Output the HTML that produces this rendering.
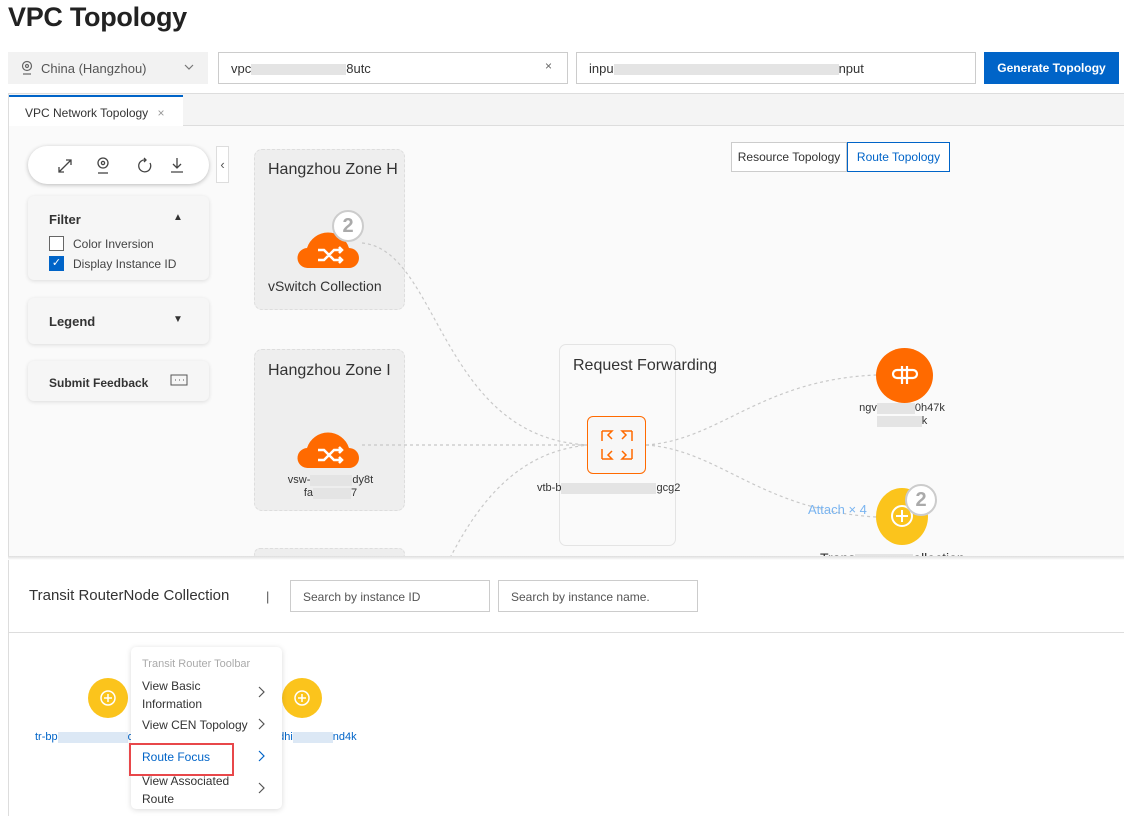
<!DOCTYPE html>
<html><head><meta charset="utf-8"><style>
*{box-sizing:border-box;margin:0;padding:0}
body{width:1124px;height:816px;overflow:hidden;background:#fff;font-family:"Liberation Sans",sans-serif;color:#333;position:relative}
.a{position:absolute}
.blur{background:#e4e4e4;display:inline-block;height:11px;vertical-align:middle}
.card{background:#f6f6f6;border-radius:6px;box-shadow:0 1px 4px rgba(0,0,0,.12)}
.zone{background:#eeeeee;border:1px dashed #ddd;border-radius:8px}
</style></head><body>
<div class="a" style="left:8px;top:2px;font-size:27px;color:#222;font-weight:bold;letter-spacing:-0.3px">VPC Topology</div>
<div class="a" style="left:8px;top:52px;width:200px;height:32px;background:#f2f2f2;font-size:13px;color:#555;padding:9px 0 0 33px">China (Hangzhou)</div>
<svg class="a" style="left:20px;top:60px" width="14" height="16" viewBox="0 0 14 16" fill="none" stroke="#666" stroke-width="1.2"><circle cx="7" cy="6" r="4.5"/><circle cx="7" cy="6" r="1.5"/><path d="M3 14h8"/></svg>
<svg class="a" style="left:184px;top:64px" width="10" height="7" fill="none" stroke="#777" stroke-width="1.2"><path d="M1 1l4 4 4-4"/></svg>
<div class="a" style="left:218px;top:52px;width:350px;height:32px;border:1px solid #ccc;font-size:13px;padding:8px 0 0 12px">vpc<span class="blur" style="width:95px"></span>8utc</div>
<div class="a" style="left:545px;top:59px;font-size:12px;color:#666">×</div>
<div class="a" style="left:576px;top:52px;width:400px;height:32px;border:1px solid #ccc;font-size:13px;padding:8px 0 0 12px">inpu<span class="blur" style="width:225px"></span>nput</div>
<div class="a" style="left:984px;top:52px;width:135px;height:32px;background:#0064c8;color:#fff;font-size:12px;font-weight:bold;text-align:center;line-height:32px">Generate Topology</div>
<div class="a" style="left:8px;top:93px;width:1116px;height:33px;background:#f4f4f4;border-top:1px solid #ddd;border-bottom:1px solid #ddd;border-left:1px solid #ddd"></div>
<div class="a" style="left:9px;top:95px;width:174px;height:32px;background:#fff;border-top:2px solid #0064c8;font-size:12px;padding:9px 0 0 16px">VPC Network Topology <span style="color:#999;margin-left:6px">×</span></div>
<div class="a" style="left:8px;top:126px;width:1116px;height:432px;background:#fafafa;border-left:1px solid #ddd"></div>
<div class="a" style="left:28px;top:146px;width:181px;height:38px;background:#fff;border-radius:19px;box-shadow:0 1px 4px rgba(0,0,0,.25)"></div>
<svg class="a" style="left:56px;top:155px" width="140" height="20" fill="none" stroke="#444" stroke-width="1.3"><path d="M3 17l12-12M10 5h5v5M3 12v5h5"/><circle cx="47" cy="8" r="5"/><circle cx="47" cy="8" r="1.6"/><path d="M42 18h10"/><path d="M90 5a6 6 0 1 0 4 3M88 3l2 2-2 2"/><path d="M121 3v10M117 9l4 4 4-4M115 17h12"/></svg>
<div class="a" style="left:216px;top:146px;width:13px;height:37px;border:1px solid #ddd;background:#fff;font-size:13px;line-height:35px;text-align:center;color:#555">‹</div>
<div class="a card" style="left:28px;top:196px;width:181px;height:84px"></div>
<div class="a" style="left:49px;top:212px;font-size:13px;font-weight:bold">Filter</div>
<div class="a" style="left:173px;top:212px;font-size:10px">▲</div>
<div class="a" style="left:49px;top:236px;width:15px;height:15px;border:1px solid #666;background:#fff"></div>
<div class="a" style="left:73px;top:237px;font-size:12px;color:#444">Color Inversion</div>
<div class="a" style="left:49px;top:256px;width:15px;height:15px;background:#0064c8;color:#fff;font-size:11px;text-align:center;line-height:15px">✓</div>
<div class="a" style="left:73px;top:257px;font-size:12px;color:#444">Display Instance ID</div>
<div class="a card" style="left:28px;top:298px;width:181px;height:46px"></div>
<div class="a" style="left:49px;top:314px;font-size:13px;font-weight:bold">Legend</div>
<div class="a" style="left:173px;top:314px;font-size:10px">▼</div>
<div class="a card" style="left:28px;top:361px;width:181px;height:40px"></div>
<div class="a" style="left:49px;top:376px;font-size:12px;font-weight:bold">Submit Feedback</div>
<svg class="a" style="left:170px;top:374px" width="18" height="14" fill="none" stroke="#555"><rect x="1" y="1" width="16" height="10"/><path d="M5 6h1M9 6h1M13 6h1"/></svg>
<div class="a zone" style="left:254px;top:149px;width:151px;height:161px"></div>
<div class="a" style="left:268px;top:161px;font-size:16px;color:#333">Hangzhou Zone H</div>
<div class="a zone" style="left:254px;top:349px;width:151px;height:162px"></div>
<div class="a" style="left:268px;top:362px;font-size:16px;color:#333">Hangzhou Zone I</div>
<div class="a zone" style="left:254px;top:548px;width:151px;height:12px"></div>
<div class="a" style="left:559px;top:344px;width:117px;height:202px;border:1px solid #e4e4e4;border-radius:7px"></div>
<div class="a" style="left:573px;top:357px;font-size:16px;color:#333">Request Forwarding</div>
<svg class="a" style="left:0;top:0" width="1124" height="560" fill="none" stroke="#c8c8c8" stroke-width="1.2" stroke-dasharray="3 3">
<path d="M362 243C440 250 440 440 590 445"/><path d="M362 445H590"/><path d="M450 558C480 500 520 450 590 445"/><path d="M646 445C720 440 760 380 876 375"/><path d="M646 445C720 450 760 510 876 517"/>
</svg>
<svg class="a" style="left:296px;top:222px" width="66" height="48"><path d="M12 46a10 10 0 0 1-1-20 22 22 0 0 1 42 0 10 10 0 0 1 0 20z" fill="#ff6a00"/><path d="M22 28h6l10 10h8M22 38h6l10-10h8M43 25l3 3-3 3M43 35l3 3-3 3" stroke="#fff" stroke-width="2.5" fill="none"/></svg>
<div class="a" style="left:332px;top:210px;width:32px;height:32px;border-radius:50%;background:#fff;border:2px solid #ccc;color:#aaa;font-size:20px;font-weight:bold;text-align:center;line-height:28px">2</div>
<div class="a" style="left:268px;top:278px;font-size:14px">vSwitch Collection</div>
<svg class="a" style="left:296px;top:422px" width="66" height="48"><path d="M12 46a10 10 0 0 1-1-20 22 22 0 0 1 42 0 10 10 0 0 1 0 20z" fill="#ff6a00"/><path d="M22 28h6l10 10h8M22 38h6l10-10h8M43 25l3 3-3 3M43 35l3 3-3 3" stroke="#fff" stroke-width="2.5" fill="none"/></svg>
<div class="a" style="left:283px;top:474px;font-size:11px;line-height:13px;text-align:center;width:95px">vsw-<span class="blur" style="width:42px"></span>dy8t<br>fa<span class="blur" style="width:38px"></span>7</div>
<div class="a" style="left:587px;top:416px;width:59px;height:58px;border:1.5px solid #ff6a00;border-radius:6px;background:#f7f7f7"></div>
<svg class="a" style="left:600px;top:429px" width="34" height="32" fill="none" stroke="#ff6a00" stroke-width="1.5"><path d="M2 2h10l-4 4 4 4M32 2H22l4 4-4 4M2 30h10l-4-4 4-4M32 30H22l4-4-4-4M2 2v10M32 2v10M2 30V20M32 30V20"/></svg>
<div class="a" style="left:537px;top:482px;font-size:11px">vtb-b<span class="blur" style="width:95px"></span>gcg2</div>
<div class="a" style="left:876px;top:348px;width:57px;height:55px;border-radius:50%;background:#ff6a00"></div>
<svg class="a" style="left:891px;top:364px" width="28" height="22" fill="none" stroke="#fff" stroke-width="2.2"><path d="M6 6h16a4 4 0 0 1 0 8H6a4 4 0 0 1 0-8M11 2v18M16 2v18"/></svg>
<div class="a" style="left:852px;top:402px;font-size:11px;line-height:13px;text-align:center;width:100px">ngv<span class="blur" style="width:38px"></span>0h47k<br><span class="blur" style="width:45px"></span>k</div>
<div class="a" style="left:808px;top:502px;font-size:13px;color:#79b4f0">Attach × 4</div>
<div class="a" style="left:876px;top:488px;width:52px;height:57px;border-radius:50%;background:#fbc41c"></div>
<svg class="a" style="left:889px;top:503px" width="26" height="26" fill="none" stroke="#fff" stroke-width="2"><circle cx="13" cy="13" r="10"/><path d="M13 7v12M7 13h12"/></svg>
<div class="a" style="left:905px;top:484px;width:32px;height:32px;border-radius:50%;background:#fff;border:2px solid #ccc;color:#aaa;font-size:20px;font-weight:bold;text-align:center;line-height:28px">2</div>
<div class="a" style="left:820px;top:550px;font-size:14px">Trans<span class="blur" style="width:58px"></span>ollection</div>
<div class="a" style="left:731px;top:142px;width:116px;height:30px;border:1px solid #ccc;background:#fff;font-size:12px;text-align:center;line-height:28px">Resource Topology</div>
<div class="a" style="left:847px;top:142px;width:103px;height:30px;border:1px solid #0064c8;background:#fff;font-size:12px;color:#0064c8;text-align:center;line-height:28px">Route Topology</div>
<div class="a" style="left:8px;top:556px;width:1116px;height:4px;background:linear-gradient(#ddd,#fff)"></div>
<div class="a" style="left:8px;top:560px;width:1116px;height:256px;background:#fff;border-left:1px solid #ddd"></div>
<div class="a" style="left:29px;top:587px;font-size:15px;color:#333">Transit RouterNode Collection</div>
<div class="a" style="left:266px;top:589px;font-size:13px;color:#555">|</div>
<div class="a" style="left:290px;top:580px;width:200px;height:32px;border:1px solid #ccc;font-size:12px;color:#555;padding:9px 0 0 12px">Search by instance ID</div>
<div class="a" style="left:498px;top:580px;width:200px;height:32px;border:1px solid #ccc;font-size:12px;color:#555;padding:9px 0 0 12px">Search by instance name.</div>
<div class="a" style="left:8px;top:632px;width:1116px;height:1px;background:#ddd"></div>
<div class="a" style="left:88px;top:678px;width:40px;height:40px;border-radius:50%;background:#fbc41c"></div>
<svg class="a" style="left:99px;top:689px" width="18" height="18" fill="none" stroke="#fff" stroke-width="1.5"><circle cx="9" cy="9" r="7"/><path d="M9 5v8M5 9h8"/></svg>
<div class="a" style="left:282px;top:678px;width:40px;height:40px;border-radius:50%;background:#fbc41c"></div>
<svg class="a" style="left:293px;top:689px" width="18" height="18" fill="none" stroke="#fff" stroke-width="1.5"><circle cx="9" cy="9" r="7"/><path d="M9 5v8M5 9h8"/></svg>
<div class="a" style="left:35px;top:731px;font-size:11px;color:#0064c8">tr-bp<span class="blur" style="width:70px;background:#dce8f5"></span>ov</div>
<div class="a" style="left:272px;top:731px;font-size:11px;color:#0064c8">hdhi<span class="blur" style="width:40px;background:#dce8f5"></span>nd4k</div>
<div class="a" style="left:131px;top:647px;width:151px;height:162px;background:#fff;border-radius:5px;box-shadow:0 1px 6px rgba(0,0,0,.15)"></div>
<div class="a" style="left:142px;top:658px;font-size:11px;color:#aaa">Transit Router Toolbar</div>
<div class="a" style="left:142px;top:677px;font-size:12px;line-height:18px;color:#333">View Basic<br>Information</div>
<div class="a" style="left:142px;top:718px;font-size:12px;color:#333">View CEN Topology</div>
<div class="a" style="left:142px;top:750px;font-size:12px;color:#0064c8">Route Focus</div>
<div class="a" style="left:142px;top:772px;font-size:12px;line-height:18px;color:#333">View Associated<br>Route</div>
<svg class="a" style="left:258px;top:686px" width="8" height="110" fill="none" stroke="#555" stroke-width="1.2"><path d="M1 1l5 5-5 5M1 33l5 5-5 5"/><path d="M1 65l5 5-5 5" stroke="#0064c8"/><path d="M1 97l5 5-5 5"/></svg>
<div class="a" style="left:129px;top:743px;width:105px;height:33px;border:2px solid #e8474a"></div>
</body></html>
